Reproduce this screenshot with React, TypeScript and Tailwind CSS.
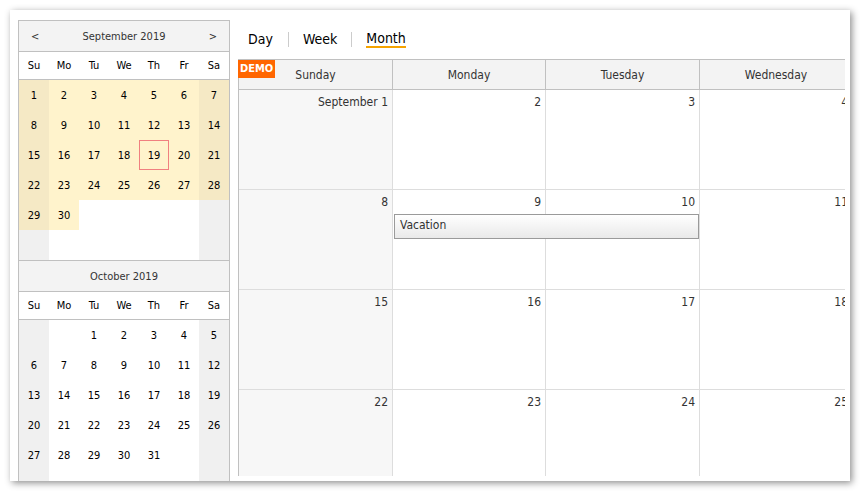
import React from 'react';

const FONT = "font-['DejaVu_Sans_Condensed','Liberation_Sans',sans-serif]";
const DOW = ['Su', 'Mo', 'Tu', 'We', 'Th', 'Fr', 'Sa'];
const COLS = 'grid grid-cols-[154px_153px_154px_153px]';

type MonthProps = {
  title: string;
  offset: number;
  days: number;
  selected?: boolean;
  today?: number;
  arrows?: boolean;
  first?: boolean;
};

function NavMonth({ title, offset, days, selected, today, arrows, first }: MonthProps) {
  const cells = Array.from({ length: 42 }, (_, i) => {
    const d = i - offset + 1;
    return d >= 1 && d <= days ? d : null;
  });

  return (
    <div className={first ? '' : 'border-t border-[#c0c0c0]'}>
      <div className="h-[31px] pt-[2px] bg-[#f3f3f3] border-b border-[#c0c0c0] flex items-center justify-between px-[12px] text-[11px] text-[#333]">
        <span className="w-[10px]">{arrows ? '<' : ''}</span>
        <span>{title}</span>
        <span className="w-[10px] text-right">{arrows ? '>' : ''}</span>
      </div>
      <div className="grid grid-cols-7 h-[28px] pt-[2px] border-b border-[#c0c0c0] bg-white text-[11px] text-black">
        {DOW.map((d) => (
          <div key={d} className="flex items-center justify-center">
            {d}
          </div>
        ))}
      </div>
      <div className="grid grid-cols-7 text-[11px] text-black">
        {cells.map((d, i) => {
          const weekend = i % 7 === 0 || i % 7 === 6;
          let bg = weekend ? 'bg-[#f0f0f0]' : 'bg-white';
          if (d && selected) bg = weekend ? 'bg-[#f5e9c5]' : 'bg-[#fff3cc]';
          const isToday = d !== null && d === today;
          return (
            <div
              key={i}
              className={`h-[30px] pt-[2px] flex items-center justify-center ${bg} ${isToday ? 'border border-[#f08080]' : ''}`}
            >
              {d ?? ''}
            </div>
          );
        })}
      </div>
    </div>
  );
}

function Navigator() {
  return (
    <div className="w-[212px] shrink-0 ml-[8px] mt-[10px] self-start border border-b-0 border-[#c0c0c0]">
      <NavMonth title="September 2019" offset={0} days={30} selected today={19} arrows first />
      <NavMonth title="October 2019" offset={2} days={31} />
    </div>
  );
}

const DAYS = ['Sunday', 'Monday', 'Tuesday', 'Wednesday'];

function MonthView() {
  const weeks = [0, 1, 2, 3];
  return (
    <div className="relative w-[614px] mt-[10px] border-l border-t border-[#c0c0c0] text-[12px] text-[#333]">
      <div className={`${COLS} h-[30px] bg-[#f3f3f3] border-b border-[#c0c0c0]`}>
        {DAYS.map((d) => (
          <div key={d} className="border-r border-[#c0c0c0] flex items-center justify-center">
            {d}
          </div>
        ))}
      </div>
      <div className="absolute top-0 left-[-1px] h-[18px] px-[2px] bg-[#ff6600] text-white font-bold text-[11px] leading-[18px]">
        DEMO
      </div>
      {weeks.map((w) => (
        <div key={w} className={`relative ${COLS} h-[100px] border-b border-[#dddddd]`}>
          {DAYS.map((_, c) => {
            const n = w * 7 + c + 1;
            const label = n === 1 ? 'September 1' : `${n}`;
            return (
              <div
                key={c}
                className={`border-r border-[#dddddd] text-right pr-[4px] pt-[3px] ${c === 0 ? 'bg-[#f7f7f7]' : 'bg-white'}`}
              >
                {label}
              </div>
            );
          })}
          {w === 1 && (
            <div className="absolute left-[155px] top-[24px] w-[305px] h-[25px] border border-[#9a9a9a] bg-gradient-to-b from-white to-[#e9e9e9] pl-[5px] pt-[2px] leading-[16px] text-[#333]">
              Vacation
            </div>
          )}
        </div>
      ))}
    </div>
  );
}

function Tabs() {
  return (
    <div className="flex items-center h-[18px] mt-[20px] mb-[1px] text-[14px] text-black shrink-0">
      <div className="pl-[10px] pr-[15px] leading-[16px]">Day</div>
      <div className="w-px h-[15px] bg-[#cccccc]" />
      <div className="px-[14px] leading-[16px]">Week</div>
      <div className="w-px h-[15px] bg-[#cccccc]" />
      <div className="pl-[14px] leading-[16px]">
        <span className="inline-block border-b-2 border-[#f5a300]">Month</span>
      </div>
    </div>
  );
}

export default function App() {
  return (
    <div className={`w-[860px] h-[491px] bg-white p-[10px] ${FONT}`}>
      <div className="w-full h-full bg-white flex overflow-hidden shadow-[2px_2px_7px_rgba(0,0,0,0.45)]">
        <Navigator />
        <div className="flex-1 min-w-0 ml-[8px] mr-[5px] mb-[5px] overflow-hidden flex flex-col">
          <Tabs />
          <MonthView />
        </div>
      </div>
    </div>
  );
}
